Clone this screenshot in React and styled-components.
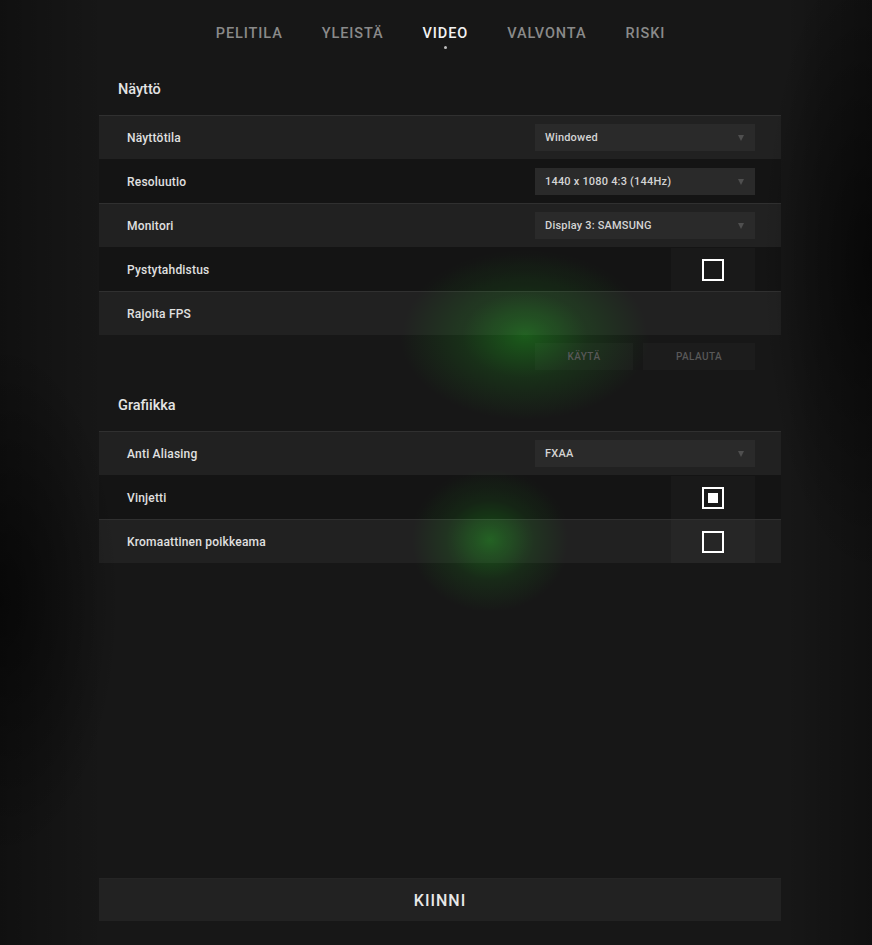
import React, { useState } from 'react';
import styled, { createGlobalStyle } from 'styled-components';

const GlobalStyle = createGlobalStyle`
  html, body {
    margin: 0;
    padding: 0;
    height: 100%;
  }
  body {
    font-family: Roboto, "Noto Sans", sans-serif;
    color: #dcdcdc;
    background-color: #171717;
    background-image:
      radial-gradient(ellipse 125px 85px at 525px 335px, rgba(28, 120, 28, 0.7), rgba(28, 120, 28, 0.25) 50%, rgba(28, 120, 28, 0) 100%),
      radial-gradient(ellipse 80px 72px at 490px 540px, rgba(28, 120, 28, 0.7), rgba(28, 120, 28, 0.2) 55%, rgba(28, 120, 28, 0) 100%),
      radial-gradient(ellipse 120px 260px at 0px 600px, rgba(0,0,0,0.55), rgba(0,0,0,0) 100%),
      radial-gradient(ellipse 110px 320px at 872px 260px, rgba(0,0,0,0.55), rgba(0,0,0,0) 100%),
      linear-gradient(90deg, rgba(0,0,0,0.3) 0%, rgba(0,0,0,0) 12%, rgba(0,0,0,0) 90%, rgba(0,0,0,0.3) 100%);
  }
  #root {
    min-height: 945px;
  }
`;

const Page = styled.div`
  width: 682px;
  margin: 0 0 0 99px;
  min-height: 945px;
  display: flex;
  flex-direction: column;
`;

const Tabs = styled.nav`
  display: flex;
  justify-content: center;
  gap: 39px;
  padding-top: 24px;
  height: 30px;
  margin-left: 1px;
`;

const Tab = styled.button`
  position: relative;
  background: none;
  border: none;
  padding: 0;
  height: 18px;
  font-family: inherit;
  font-size: 14.5px;
  font-weight: 500;
  letter-spacing: 0.9px;
  color: ${({ $active }) => ($active ? '#f2f2f2' : '#8a8a8a')};

  &::after {
    content: '';
    display: ${({ $active }) => ($active ? 'block' : 'none')};
    position: absolute;
    left: 50%;
    bottom: -7px;
    width: 3px;
    height: 3px;
    margin-left: -1px;
    border-radius: 50%;
    background: #bdbdbd;
  }
`;

const SectionTitle = styled.h2`
  margin: 0;
  padding: 27px 0 0 19px;
  height: 61px;
  box-sizing: border-box;
  font-size: 14.5px;
  line-height: 18px;
  font-weight: 500;
  color: #e4e4e4;
`;

const Rows = styled.div`
  display: flex;
  flex-direction: column;
`;

const Row = styled.div`
  height: 44px;
  box-sizing: border-box;
  display: flex;
  align-items: center;
  padding: 0 26px 0 28px;
  background: ${({ $alt }) => ($alt ? 'rgba(255,255,255,0.045)' : 'rgba(0,0,0,0.12)')};
  border-top: 1px solid ${({ $alt }) => ($alt ? 'rgba(255,255,255,0.07)' : 'transparent')};
`;

const Label = styled.span`
  flex: 1;
  font-size: 12px;
  font-weight: 500;
  letter-spacing: 0.2px;
  color: #e0e0e0;
`;

const Select = styled.div`
  width: 220px;
  height: 27px;
  box-sizing: border-box;
  display: flex;
  align-items: center;
  justify-content: space-between;
  padding: 0 11px 0 10px;
  background: #2a2a2a;
  font-size: 11px;
  font-weight: 500;
  letter-spacing: 0.2px;
  color: #d4d4d4;
`;

const Caret = styled.span`
  width: 0;
  height: 0;
  border-left: 3px solid transparent;
  border-right: 3px solid transparent;
  border-top: 6px solid #4f4f4f;
`;

const CheckCell = styled.div`
  width: 84px;
  align-self: stretch;
  display: flex;
  align-items: center;
  justify-content: center;
  background: rgba(255, 255, 255, 0.025);
`;

const Check = styled.div`
  width: 22px;
  height: 22px;
  box-sizing: border-box;
  border: 2px solid #ffffff;
  display: flex;
  align-items: center;
  justify-content: center;

  &::after {
    content: '';
    display: ${({ $on }) => ($on ? 'block' : 'none')};
    width: 10px;
    height: 10px;
    background: #ffffff;
  }
`;

const Actions = styled.div`
  height: 35px;
  display: flex;
  align-items: flex-start;
  justify-content: flex-end;
  gap: 10px;
  padding: 8px 26px 0 0;
  box-sizing: border-box;
`;

const ActionButton = styled.button`
  width: ${({ $w }) => $w}px;
  height: 27px;
  border: none;
  background: rgba(255, 255, 255, 0.025);
  font-family: inherit;
  font-size: 10px;
  font-weight: 500;
  letter-spacing: 0.4px;
  color: #585858;
`;

const Spacer = styled.div`
  flex: 1;
`;

const CloseButton = styled.button`
  height: 43px;
  margin-bottom: 24px;
  border: none;
  border-top: 1px solid #252525;
  background: #222222;
  font-family: inherit;
  font-size: 16px;
  font-weight: 500;
  letter-spacing: 1px;
  color: #e8e8e8;
`;

const tabs = ['PELITILA', 'YLEISTÄ', 'VIDEO', 'VALVONTA', 'RISKI'];

const SelectRow = ({ label, value, alt }) => (
  <Row $alt={alt}>
    <Label>{label}</Label>
    <Select>
      {value}
      <Caret />
    </Select>
  </Row>
);

const CheckRow = ({ label, on, alt }) => (
  <Row $alt={alt}>
    <Label>{label}</Label>
    <CheckCell>
      <Check $on={on} />
    </CheckCell>
  </Row>
);

export default function App() {
  const [active, setActive] = useState('VIDEO');

  return (
    <>
      <GlobalStyle />
      <Page>
        <Tabs>
          {tabs.map(t => (
            <Tab key={t} $active={t === active} onClick={() => setActive(t)}>
              {t}
            </Tab>
          ))}
        </Tabs>

        <SectionTitle>Näyttö</SectionTitle>
        <Rows>
          <SelectRow alt label="Näyttötila" value="Windowed" />
          <SelectRow label="Resoluutio" value="1440 x 1080 4:3 (144Hz)" />
          <SelectRow alt label="Monitori" value="Display 3: SAMSUNG" />
          <CheckRow label="Pystytahdistus" />
          <Row $alt>
            <Label>Rajoita FPS</Label>
          </Row>
        </Rows>
        <Actions>
          <ActionButton $w={98}>KÄYTÄ</ActionButton>
          <ActionButton $w={112}>PALAUTA</ActionButton>
        </Actions>

        <SectionTitle>Grafiikka</SectionTitle>
        <Rows>
          <SelectRow alt label="Anti Aliasing" value="FXAA" />
          <CheckRow label="Vinjetti" on />
          <CheckRow alt label="Kromaattinen poikkeama" />
        </Rows>

        <Spacer />
        <CloseButton>KIINNI</CloseButton>
      </Page>
    </>
  );
}
